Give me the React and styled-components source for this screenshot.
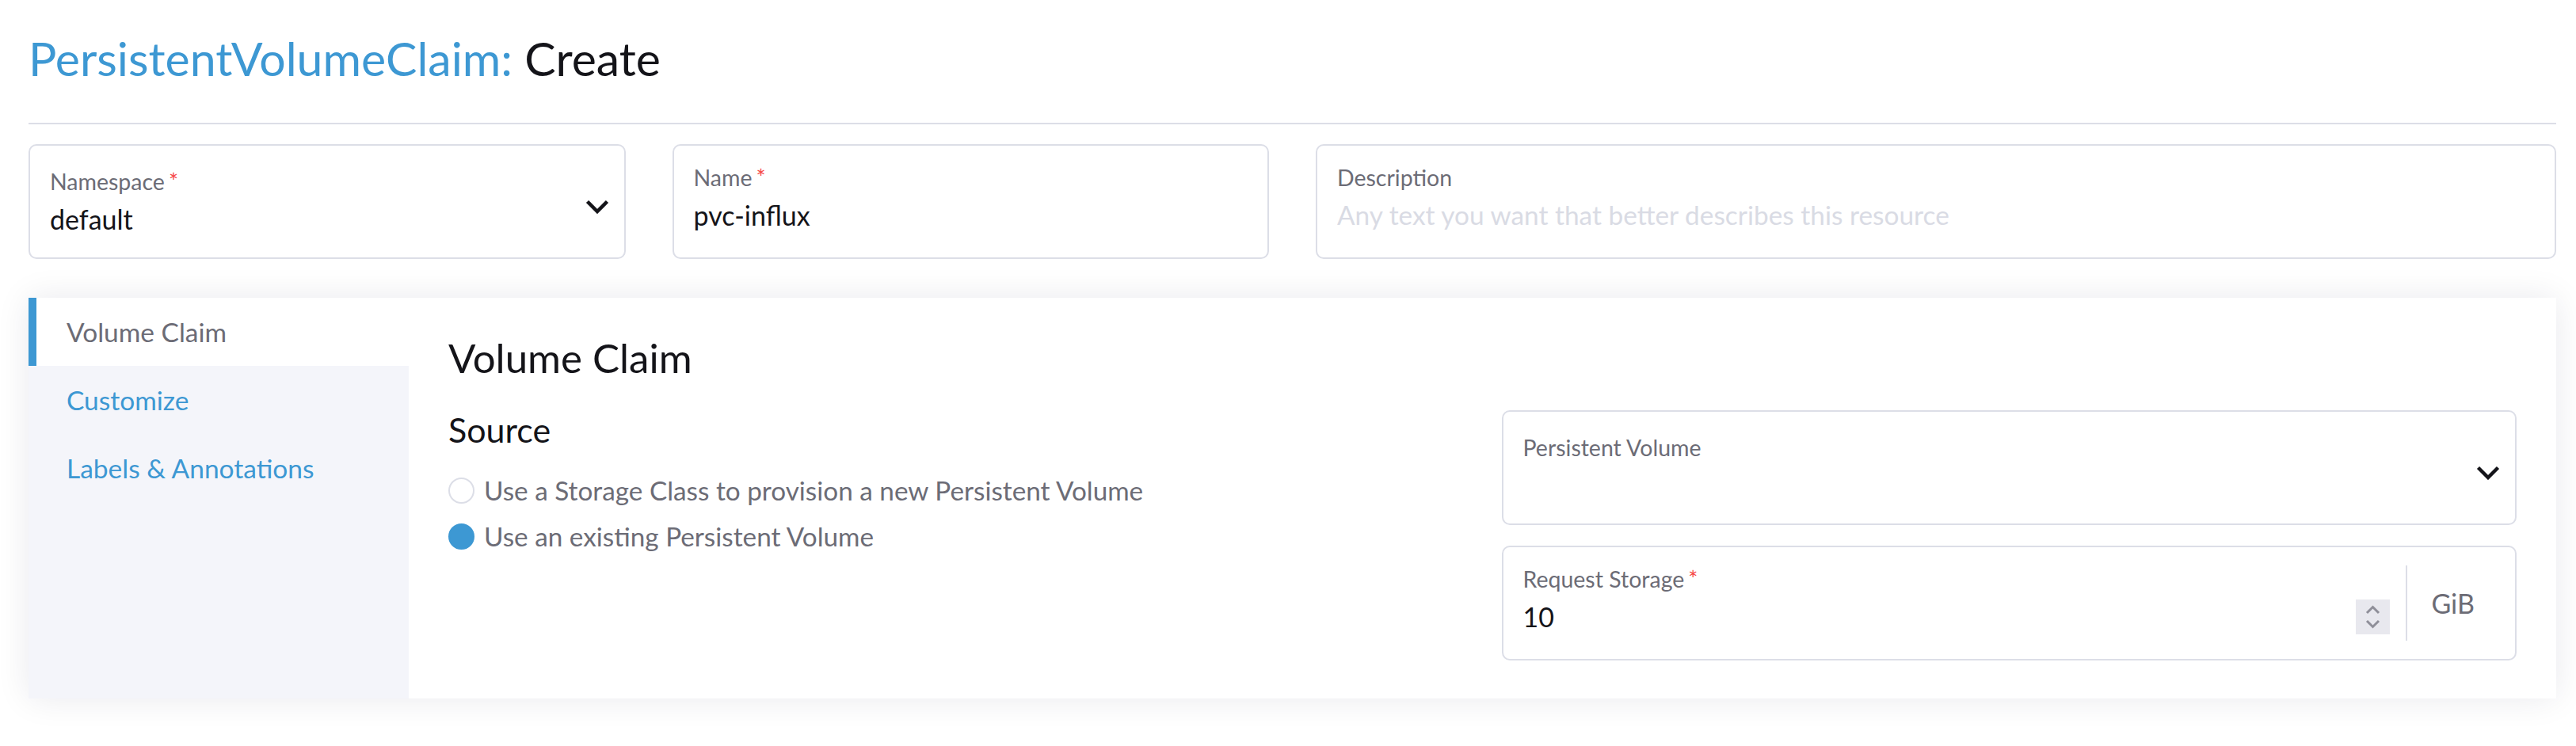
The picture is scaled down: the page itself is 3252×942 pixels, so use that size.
import React from "react";
import styled, { createGlobalStyle } from "styled-components";

const GlobalStyle = createGlobalStyle`
  html, body {
    margin: 0;
    padding: 0;
    background: #fff;
  }
  body {
    font-family: Lato, "Open Sans", "Noto Sans", sans-serif;
    color: #141419;
  }
  * {
    box-sizing: border-box;
  }
`;

const Page = styled.div`
  padding: 39px 25px 60px 36px;
`;

const Title = styled.h1`
  margin: 0;
  font-size: 59px;
  font-weight: 400;
  line-height: 70px;
  color: #141419;
  span {
    color: #3d98d3;
  }
`;

const Divider = styled.hr`
  margin: 46px 0 0;
  border: 0;
  height: 2px;
  background: #dcdee7;
`;

const TopRow = styled.div`
  margin-top: 25px;
  display: grid;
  grid-template-columns: repeat(12, 1fr);
  column-gap: 59px;
`;

const FieldBox = styled.div`
  grid-column: ${(p) => (p.$span ? `span ${p.$span}` : "auto")};
  height: 145px;
  border: 2px solid #dcdee7;
  border-radius: 10px;
  background: #fff;
  display: flex;
  align-items: center;
  padding-left: 25px;
  padding-right: ${(p) => (p.$addon ? "0" : "19px")};
`;

const FieldBody = styled.div`
  flex: 1;
  align-self: stretch;
  display: flex;
  flex-direction: column;
  padding-top: ${(p) => (p.$select ? "28px" : "23px")};
  padding-right: ${(p) => (p.$addon ? "20px" : "0")};
  min-width: 0;
`;

const Label = styled.div`
  font-size: 28.5px;
  line-height: 34px;
  color: #6c6c76;
  white-space: nowrap;
`;

const Required = styled.span`
  color: #f64747;
  margin-left: 5px;
`;

const ValueRow = styled.div`
  margin-top: 10px;
  height: 41px;
  display: flex;
  align-items: center;
  justify-content: space-between;
`;

const Value = styled.div`
  font-size: ${(p) => (p.$placeholder ? "33.4px" : "34px")};
  line-height: 41px;
  color: ${(p) => (p.$placeholder ? "#d9dbe4" : "#141419")};
  white-space: nowrap;
  overflow: hidden;
`;

const ChevronWrap = styled.div`
  flex-shrink: 0;
  margin-top: 12px;
  width: 30px;
  height: 18px;
  display: flex;
`;

const SpinnerBox = styled.div`
  flex-shrink: 0;
  width: 43px;
  height: 44px;
  background: #e8e8ee;
  display: flex;
`;

const AddonRule = styled.div`
  flex-shrink: 0;
  width: 2px;
  height: 95px;
  background: #dcdee7;
`;

const Addon = styled.div`
  flex-shrink: 0;
  padding: 0 51px 0 30px;
  font-size: 34px;
  line-height: 41px;
  color: #6c6c76;
`;

const Card = styled.div`
  margin-top: 49px;
  min-height: 506px;
  display: flex;
  background: #fff;
  box-shadow: 0 0 40px rgba(20, 20, 50, 0.09);
`;

const SideNav = styled.nav`
  width: 480px;
  flex-shrink: 0;
  background: #f4f5fa;
`;

const Tab = styled.div`
  height: 86px;
  display: flex;
  align-items: center;
  padding-left: ${(p) => (p.$active ? "38px" : "48px")};
  font-size: 33.5px;
  line-height: 41px;
  color: ${(p) => (p.$active ? "#6c6c76" : "#3d98d3")};
  background: ${(p) => (p.$active ? "#fff" : "transparent")};
  border-left: ${(p) => (p.$active ? "10px solid #3d98d3" : "0")};
`;

const Main = styled.section`
  flex: 1;
  padding: 46px 50px 40px 50px;
`;

const SectionTitle = styled.h3`
  margin: 0;
  font-size: 51px;
  font-weight: 400;
  line-height: 60px;
  color: #141419;
`;

const Columns = styled.div`
  margin-top: 36px;
  display: grid;
  grid-template-columns: 1fr 1fr;
  column-gap: 48px;
  align-items: start;
`;

const SubTitle = styled.h4`
  margin: 0;
  font-size: 43px;
  font-weight: 400;
  line-height: 50px;
  color: #141419;
`;

const RadioGroup = styled.div`
  margin-top: 31px;
  display: flex;
  flex-direction: column;
  gap: 17px;
`;

const RadioRow = styled.label`
  display: flex;
  align-items: center;
  gap: 12px;
  font-size: 33.3px;
  line-height: 41px;
  color: #6c6c76;
`;

const RadioDot = styled.span`
  width: 33px;
  height: 33px;
  border-radius: 50%;
  flex-shrink: 0;
  border: 2px solid ${(p) => (p.$checked ? "#3d98d3" : "#dcdee7")};
  background: ${(p) => (p.$checked ? "#3d98d3" : "#fff")};
`;

const Stack = styled.div`
  display: flex;
  flex-direction: column;
  gap: 26px;
`;

function Chevron() {
  return (
    <ChevronWrap>
      <svg width="30" height="18" viewBox="0 0 30 18">
        <polyline
          points="2.5,2.5 15,15 27.5,2.5"
          fill="none"
          stroke="#141419"
          strokeWidth="4.5"
        />
      </svg>
    </ChevronWrap>
  );
}

function Spinner() {
  return (
    <SpinnerBox>
      <svg width="43" height="44" viewBox="0 0 43 44">
        <polyline points="14,17 21.5,9.5 29,17" fill="none" stroke="#8f8f99" strokeWidth="3" />
        <polyline points="14,27 21.5,34.5 29,27" fill="none" stroke="#8f8f99" strokeWidth="3" />
      </svg>
    </SpinnerBox>
  );
}

function Field({ label, required, value, placeholder, select, span }) {
  return (
    <FieldBox $span={span}>
      <FieldBody $select={select}>
        <Label>
          {label}
          {required && <Required>*</Required>}
        </Label>
        <ValueRow>
          {value ? <Value>{value}</Value> : <Value $placeholder>{placeholder}</Value>}
        </ValueRow>
      </FieldBody>
      {select && <Chevron />}
    </FieldBox>
  );
}

export default function App() {
  return (
    <>
      <GlobalStyle />
      <Page>
        <Title>
          <span>PersistentVolumeClaim:</span> Create
        </Title>
        <Divider />
        <TopRow>
          <Field span={3} label="Namespace" required value="default" select />
          <Field span={3} label="Name" required value="pvc-influx" />
          <Field
            span={6}
            label="Description"
            placeholder="Any text you want that better describes this resource"
          />
        </TopRow>

        <Card>
          <SideNav>
            <Tab $active>Volume Claim</Tab>
            <Tab>Customize</Tab>
            <Tab>Labels &amp; Annotations</Tab>
          </SideNav>
          <Main>
            <SectionTitle>Volume Claim</SectionTitle>
            <Columns>
              <div>
                <SubTitle>Source</SubTitle>
                <RadioGroup>
                  <RadioRow>
                    <RadioDot />
                    Use a Storage Class to provision a new Persistent Volume
                  </RadioRow>
                  <RadioRow>
                    <RadioDot $checked />
                    Use an existing Persistent Volume
                  </RadioRow>
                </RadioGroup>
              </div>
              <Stack>
                <Field label="Persistent Volume" select />
                <FieldBox $addon>
                  <FieldBody $addon>
                    <Label>
                      Request Storage<Required>*</Required>
                    </Label>
                    <ValueRow>
                      <Value>10</Value>
                      <Spinner />
                    </ValueRow>
                  </FieldBody>
                  <AddonRule />
                  <Addon>GiB</Addon>
                </FieldBox>
              </Stack>
            </Columns>
          </Main>
        </Card>
      </Page>
    </>
  );
}
